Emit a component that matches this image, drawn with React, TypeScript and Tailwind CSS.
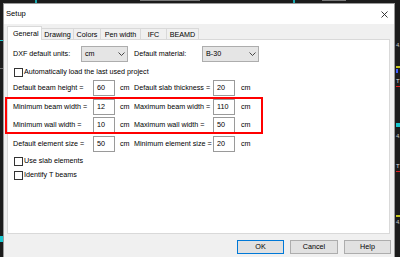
import React from "react";

const font = "font-['Liberation_Sans',Arial,sans-serif]";

function Chevron() {
  return (
    <svg width="7" height="4" viewBox="0 0 7 4" className="shrink-0">
      <path d="M0.5 0.5 L3.5 3.5 L6.5 0.5" fill="none" stroke="#333" strokeWidth="0.9" />
    </svg>
  );
}

function Combo({ value, width }: { value: string; width: string }) {
  return (
    <div className={`${width} h-[16px] bg-[#e5e5e5] border border-[#adadad] flex items-center justify-between pl-[3px] pr-[2px]`}>
      <span>{value}</span>
      <Chevron />
    </div>
  );
}

function Input({ value }: { value: string }) {
  return (
    <div className="w-[22px] h-[16px] bg-white border border-[#9a9a9a] flex items-center pl-[3px] shrink-0">
      {value}
    </div>
  );
}

function Check({ label, className = "" }: { label: string; className?: string }) {
  return (
    <div className={`flex items-center ${className}`}>
      <div className="w-[9px] h-[9px] border border-[#333] bg-white ml-[1px] shrink-0" />
      <span className="ml-[1px]">{label}</span>
    </div>
  );
}

function Row({ l1, v1, l2, v2, className = "" }: { l1: string; v1: string; l2: string; v2: string; className?: string }) {
  return (
    <div className={`flex items-center h-[16px] ${className}`}>
      <span className="w-[80px] shrink-0">{l1}</span>
      <Input value={v1} />
      <span className="ml-[5px] w-[14px] shrink-0">cm</span>
      <span className="w-[79px] shrink-0">{l2}</span>
      <Input value={v2} />
      <span className="ml-[6px]">cm</span>
    </div>
  );
}

export default function App() {
  const tabs = [
    { t: "General", w: "w-[35px]" },
    { t: "Drawing", w: "w-[32px]" },
    { t: "Colors", w: "w-[27px]" },
    { t: "Pen width", w: "w-[40px]" },
    { t: "IFC", w: "w-[26px]" },
    { t: "BEAMD", w: "w-[32px]" },
  ];
  return (
    <div className={`relative w-[400px] h-[257px] overflow-hidden bg-[#1c1c1c] ${font} text-[7.2px] leading-none text-black`}>
      {/* CAD background marks */}
      <div className="absolute left-[35px] top-0 w-[2px] h-[3px] bg-[#19a8b0]" />
      <div className="absolute left-[293px] top-0 w-[2px] h-[3px] bg-[#19a8b0]" />
      <div className="absolute left-[140px] top-0 w-[60px] h-[1px] bg-[#7a7a7a]" />
      <div className="absolute left-[322px] top-0 w-[24px] h-[1px] bg-[#7a7a7a]" />
      <div className="absolute left-0 top-[40px] w-[3px] h-[1px] bg-[#19c8d0]" />
      <div className="absolute left-0 top-[68px] w-[3px] h-[1px] bg-[#6a6a6a]" />
      <div className="absolute left-0 top-[236px] w-[3px] h-[6px] bg-[#19c8d0]" />
      <div className="absolute left-[396px] top-[42px] text-[6px] text-[#c8c8c8]">4.</div>
      <div className="absolute left-[396px] top-[66px] w-[4px] h-[2px] bg-[#c8c820]" />
      <div className="absolute left-[396px] top-[69px] w-[2px] h-[4px] bg-[#4060ff]" />
      <div className="absolute left-[396px] top-[78px] text-[6px] text-[#e0e0e0]">T</div>
      <div className="absolute left-[396px] top-[86px] w-[4px] h-[1px] bg-[#e02020]" />
      <div className="absolute left-[396px] top-[123px] w-[4px] h-[4px] bg-[#19c8d0]" />
      <div className="absolute left-[396px] top-[133px] text-[6px] text-[#c8c8c8]">4.</div>
      <div className="absolute left-[396px] top-[163px] text-[6px] text-[#e0e0e0]">T</div>
      <div className="absolute left-[396px] top-[171px] w-[4px] h-[1px] bg-[#e02020]" />
      <div className="absolute left-[396px] top-[215px] w-[4px] h-[2px] bg-[#c8c820]" />
      <div className="absolute left-[396px] top-[219px] text-[6px] text-[#c8c8c8]">4.</div>

      {/* Dialog window */}
      <div className="absolute left-[3px] top-[3px] w-[392px] h-[262px] border border-[#9a9a9a] bg-[#f0f0f0] flex flex-col">
        <div className="h-[20px] bg-white flex items-center justify-between pl-[2px] pr-[6px] shrink-0">
          <span className="text-[7.6px]">Setup</span>
          <svg width="7" height="7" viewBox="0 0 7 7">
            <path d="M0.5 0.5 L6.5 6.5 M6.5 0.5 L0.5 6.5" stroke="#222" strokeWidth="0.9" />
          </svg>
        </div>
        <div className="flex flex-col pl-[3px] pt-[2px]">
          {/* tabs */}
          <div className="flex items-end h-[14px]">
            {tabs.map((tb, i) =>
              i === 0 ? (
                <div key={tb.t} className={`${tb.w} h-[14px] bg-white border border-b-0 border-[#d9d9d9] flex items-center pl-[5px] relative z-10`}>
                  {tb.t}
                </div>
              ) : (
                <div key={tb.t} className={`${tb.w} h-[12px] bg-[#f0f0f0] border border-l-0 border-b-0 border-[#d9d9d9] flex items-center justify-center`}>
                  {tb.t}
                </div>
              )
            )}
          </div>
          {/* panel */}
          <div className="w-[383px] h-[195px] bg-white border border-[#d9d9d9] -mt-[1px] flex flex-col pl-[5px] pt-[6px]">
            <div className="flex items-center h-[16px]">
              <span className="w-[68px] shrink-0">DXF default units:</span>
              <Combo value="cm" width="w-[47px]" />
              <span className="ml-[6px] w-[68px] shrink-0">Default material:</span>
              <Combo value="B-30" width="w-[57px]" />
            </div>
            <Check label="Automatically load the last used project" className="mt-[5px] h-[10px]" />
            <Row className="mt-[3px]" l1="Default beam height =" v1="60" l2="Default slab thickness =" v2="20" />
            <Row className="mt-[3px]" l1="Minimum beam width =" v1="12" l2="Maximum beam width =" v2="110" />
            <Row className="mt-[2px]" l1="Minimum wall width =" v1="10" l2="Maximum wall width =" v2="50" />
            <Row className="mt-[3px]" l1="Default element size =" v1="50" l2="Minimum element size =" v2="20" />
            <Check label="Use slab elements" className="mt-[4px] h-[10px]" />
            <Check label="Identify T beams" className="mt-[4px] h-[10px]" />
          </div>
          {/* buttons */}
          <div className="flex justify-end gap-[6px] mt-[6px] pr-[2px] w-[386px]">
            <button className="w-[47px] h-[14px] bg-[#e1e1e1] border border-[#0078d7] text-[7.2px] leading-none">OK</button>
            <button className="w-[48px] h-[14px] bg-[#e1e1e1] border border-[#adadad] text-[7.2px] leading-none">Cancel</button>
            <button className="w-[47px] h-[14px] bg-[#e1e1e1] border border-[#adadad] text-[7.2px] leading-none">Help</button>
          </div>
        </div>
      </div>

      {/* red highlight annotation */}
      <div className="absolute left-[5px] top-[97px] w-[258px] h-[37px] border-2 border-[#ff0000]" />
    </div>
  );
}
